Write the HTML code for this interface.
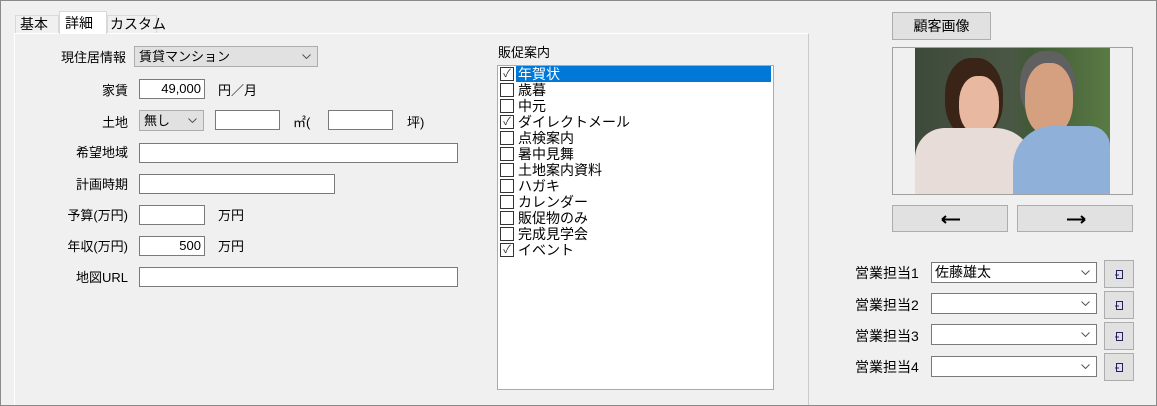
<!DOCTYPE html><html><head><meta charset="utf-8"><style>
*{box-sizing:border-box;margin:0;padding:0}
body{width:1157px;height:406px;background:#f0f0f0;font-family:"Liberation Sans","Noto Sans CJK JP",sans-serif;font-size:13px;color:#000;position:relative;overflow:hidden}
.a{position:absolute;white-space:nowrap;line-height:16px}
.in{position:absolute;background:#fff;border:1px solid #7a7a7a;height:20px;line-height:18px;padding:0 3px;text-align:right}
.cb{position:absolute;background:#e1e1e1;border:1px solid #adadad;height:21px;line-height:19px;padding:0 4px}
.cw{position:absolute;background:#fff;border:1px solid #7a7a7a;height:21px;line-height:19px;padding:0 3px}
.v{position:absolute;right:6px;top:7px;width:9px;height:5px}
.btn{position:absolute;background:#e1e1e1;border:1px solid #adadad;text-align:center}
.r{text-align:right}
.it{position:absolute;left:0;height:16px;line-height:16px;width:100%}
.ck{position:absolute;left:2px;top:1px;width:14px;height:14px;border:1px solid #333;background:#fff;font-size:11px;line-height:12px;text-align:center;color:#333}
.tx{position:absolute;left:20px;top:0;font-size:14px}
.ic{position:absolute;left:10px;top:9px;width:9px;height:9px}
</style></head><body>
<div style="position:absolute;left:0;top:0;width:1157px;height:406px;border:1px solid #8a8a8a;z-index:5;pointer-events:none"></div>
<div style="position:absolute;left:14px;top:33px;width:795px;height:372px;border-left:1px solid #fff;border-top:1px solid #fff;border-right:1px solid #ccc"></div>
<div class="a" style="left:15px;top:15px;width:44px;height:18px;border:1px solid #d9d9d9;border-bottom:none;padding-left:4px;font-size:14px">基本</div>
<div class="a" style="left:59px;top:11px;width:48px;height:23px;background:#fff;border:1px solid #d9d9d9;border-bottom:none;padding:3px 5px;font-size:14px">詳細</div>
<div class="a" style="left:107px;top:15px;width:50px;height:18px;border:1px solid #d9d9d9;border-bottom:none;padding-left:2px;font-size:14px">カスタム</div>

<div class="a r" style="left:30px;top:50px;width:96px">現住居情報</div>
<div class="cb" style="left:134px;top:46px;width:184px">賃貸マンション<svg class="v" viewBox="0 0 9 5"><path d="M0.5 0.5 L4.5 4.5 L8.5 0.5" fill="none" stroke="#555"/></svg></div>
<div class="a r" style="left:30px;top:83px;width:98px">家賃</div>
<div class="in" style="left:139px;top:79px;width:66px">49,000</div>
<div class="a" style="left:218px;top:83px">円／月</div>
<div class="a r" style="left:30px;top:115px;width:98px">土地</div>
<div class="cb" style="left:139px;top:110px;width:65px">無し<svg class="v" viewBox="0 0 9 5"><path d="M0.5 0.5 L4.5 4.5 L8.5 0.5" fill="none" stroke="#555"/></svg></div>
<div class="in" style="left:215px;top:110px;width:65px"></div>
<div class="a" style="left:293px;top:115px">㎡(</div>
<div class="in" style="left:328px;top:110px;width:65px"></div>
<div class="a" style="left:407px;top:115px">坪)</div>
<div class="a r" style="left:30px;top:145px;width:98px">希望地域</div>
<div class="in" style="left:139px;top:143px;width:319px"></div>
<div class="a r" style="left:30px;top:177px;width:98px">計画時期</div>
<div class="in" style="left:139px;top:174px;width:196px"></div>
<div class="a r" style="left:30px;top:208px;width:98px">予算(万円)</div>
<div class="in" style="left:139px;top:205px;width:66px"></div>
<div class="a" style="left:218px;top:208px">万円</div>
<div class="a r" style="left:30px;top:239px;width:98px">年収(万円)</div>
<div class="in" style="left:139px;top:236px;width:66px">500</div>
<div class="a" style="left:218px;top:239px">万円</div>
<div class="a r" style="left:30px;top:270px;width:98px">地図URL</div>
<div class="in" style="left:139px;top:267px;width:319px"></div>

<div class="a" style="left:498px;top:45px">販促案内</div>
<div style="position:absolute;left:497px;top:65px;width:277px;height:325px;background:#fff;border:1px solid #aaa">
<div class="it" style="top:0"><div style="position:absolute;left:18px;top:0;width:255px;height:16px;background:#0078d7"></div><div class="ck">✓</div><div class="tx" style="color:#fff">年賀状</div></div>
<div class="it" style="top:16px"><div class="ck"></div><div class="tx">歳暮</div></div>
<div class="it" style="top:32px"><div class="ck"></div><div class="tx">中元</div></div>
<div class="it" style="top:48px"><div class="ck">✓</div><div class="tx">ダイレクトメール</div></div>
<div class="it" style="top:64px"><div class="ck"></div><div class="tx">点検案内</div></div>
<div class="it" style="top:80px"><div class="ck"></div><div class="tx">暑中見舞</div></div>
<div class="it" style="top:96px"><div class="ck"></div><div class="tx">土地案内資料</div></div>
<div class="it" style="top:112px"><div class="ck"></div><div class="tx">ハガキ</div></div>
<div class="it" style="top:128px"><div class="ck"></div><div class="tx">カレンダー</div></div>
<div class="it" style="top:144px"><div class="ck"></div><div class="tx">販促物のみ</div></div>
<div class="it" style="top:160px"><div class="ck"></div><div class="tx">完成見学会</div></div>
<div class="it" style="top:176px"><div class="ck">✓</div><div class="tx">イベント</div></div>
</div>

<div class="btn" style="left:892px;top:12px;width:99px;height:28px;line-height:26px;font-size:14px">顧客画像</div>
<div style="position:absolute;left:892px;top:47px;width:241px;height:148px;border:1px solid #a0a0a0;background:#f0f0f0;overflow:hidden">
<div style="position:absolute;left:22px;top:0;width:195px;height:146px;background:linear-gradient(90deg,#3d4a3a 0,#4a5744 50%,#3f5a35 60%,#5a7a45 100%)"></div>
<div style="position:absolute;left:52px;top:10px;width:58px;height:80px;border-radius:45%;background:#3a2418"></div>
<div style="position:absolute;left:66px;top:28px;width:40px;height:58px;border-radius:45%;background:#e8b8a0"></div>
<div style="position:absolute;left:22px;top:80px;width:120px;height:66px;border-radius:30px 40px 0 0;background:#e8dcd8"></div>
<div style="position:absolute;left:127px;top:3px;width:55px;height:70px;border-radius:45%;background:#606060"></div>
<div style="position:absolute;left:132px;top:15px;width:48px;height:72px;border-radius:45%;background:#d4a080"></div>
<div style="position:absolute;left:120px;top:78px;width:97px;height:68px;border-radius:40px 20px 0 0;background:#8fb0d8"></div>
</div>
<div class="btn" style="left:892px;top:205px;width:116px;height:27px"><svg style="position:absolute;left:48px;top:9px" width="20" height="9" viewBox="0 0 20 9"><path d="M1 4.5H19M1 4.5L5 1M1 4.5L5 8" fill="none" stroke="#000" stroke-width="2"/></svg></div>
<div class="btn" style="left:1017px;top:205px;width:116px;height:27px"><svg style="position:absolute;left:48px;top:9px" width="20" height="9" viewBox="0 0 20 9"><path d="M1 4.5H19M19 4.5L15 1M19 4.5L15 8" fill="none" stroke="#000" stroke-width="2"/></svg></div>

<div class="a" style="left:855px;top:265px;font-size:14px">営業担当1</div>
<div class="cw" style="left:931px;top:262px;width:166px;font-size:14px">佐藤雄太<svg class="v" viewBox="0 0 9 5"><path d="M0.5 0.5 L4.5 4.5 L8.5 0.5" fill="none" stroke="#555"/></svg></div>
<div class="a" style="left:855px;top:297px;font-size:14px">営業担当2</div>
<div class="cw" style="left:931px;top:293px;width:166px"><svg class="v" viewBox="0 0 9 5"><path d="M0.5 0.5 L4.5 4.5 L8.5 0.5" fill="none" stroke="#555"/></svg></div>
<div class="a" style="left:855px;top:328px;font-size:14px">営業担当3</div>
<div class="cw" style="left:931px;top:324px;width:166px"><svg class="v" viewBox="0 0 9 5"><path d="M0.5 0.5 L4.5 4.5 L8.5 0.5" fill="none" stroke="#555"/></svg></div>
<div class="a" style="left:855px;top:359px;font-size:14px">営業担当4</div>
<div class="cw" style="left:931px;top:356px;width:166px"><svg class="v" viewBox="0 0 9 5"><path d="M0.5 0.5 L4.5 4.5 L8.5 0.5" fill="none" stroke="#555"/></svg></div>
<div class="btn" style="left:1104px;top:260px;width:30px;height:28px"><svg class="ic" viewBox="0 0 9 9"><rect x="1.5" y="0.5" width="6" height="8" fill="#dde" stroke="#225"/><path d="M0 5H4" stroke="#225"/></svg></div>
<div class="btn" style="left:1104px;top:291px;width:30px;height:28px"><svg class="ic" viewBox="0 0 9 9"><rect x="1.5" y="0.5" width="6" height="8" fill="#dde" stroke="#225"/><path d="M0 5H4" stroke="#225"/></svg></div>
<div class="btn" style="left:1104px;top:322px;width:30px;height:28px"><svg class="ic" viewBox="0 0 9 9"><rect x="1.5" y="0.5" width="6" height="8" fill="#dde" stroke="#225"/><path d="M0 5H4" stroke="#225"/></svg></div>
<div class="btn" style="left:1104px;top:353px;width:30px;height:28px"><svg class="ic" viewBox="0 0 9 9"><rect x="1.5" y="0.5" width="6" height="8" fill="#dde" stroke="#225"/><path d="M0 5H4" stroke="#225"/></svg></div>
</body></html>
